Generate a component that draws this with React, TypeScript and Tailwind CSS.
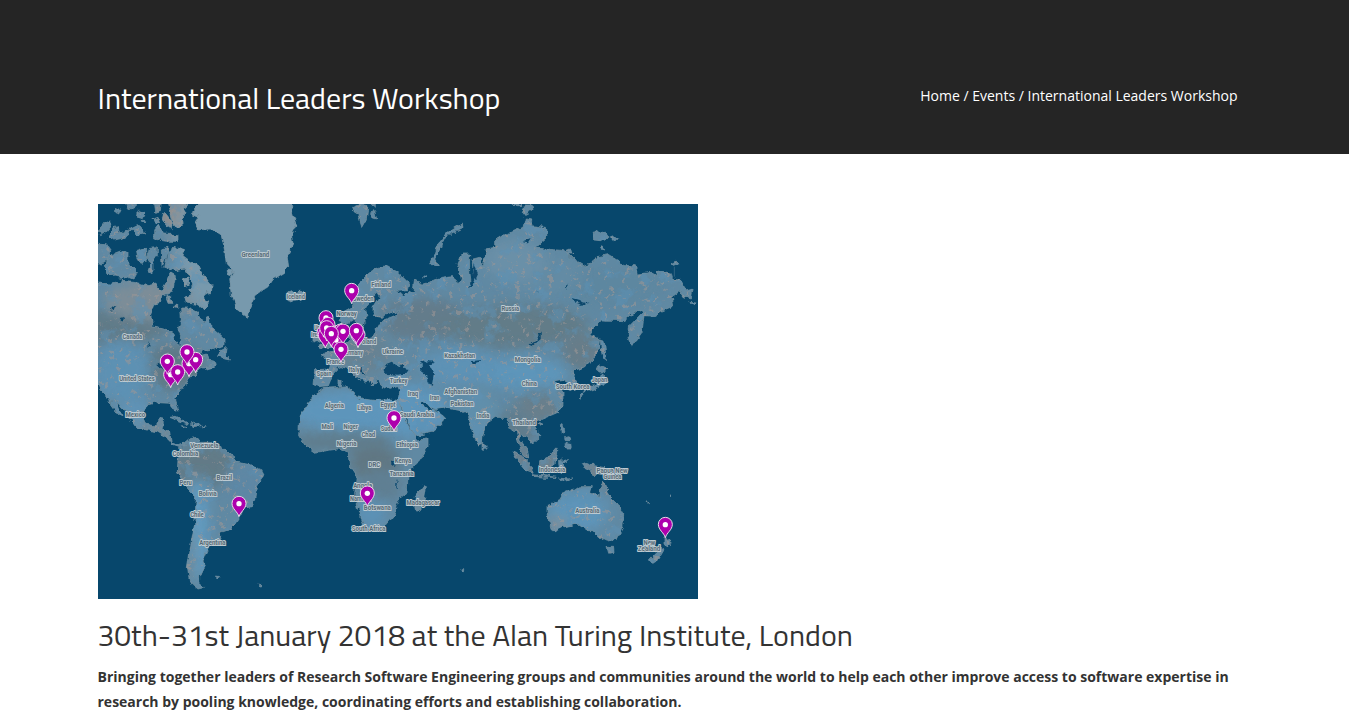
const EURASIA =
  "M720 350L738 322L760 310L775 285L778 262L788 232L815 205L840 190L865 185L900 205L935 240L930 260L900 262L885 256L915 275L945 262L950 230L975 240L1010 230L1030 220L1065 215L1080 240L1090 225L1080 180L1092 150L1115 150L1115 200L1120 240L1130 225L1125 165L1145 160L1155 190L1160 160L1165 135L1190 130L1190 108L1200 100L1240 85L1275 70L1282 42L1305 45L1300 65L1345 70L1350 100L1312 132L1345 135L1400 140L1430 170L1455 185L1490 175L1500 158L1530 152L1560 170L1575 185L1612 185L1618 210L1660 205L1680 215L1680 202L1715 210L1745 232L1762 258L1785 252L1780 285L1755 278L1745 262L1720 280L1725 308L1690 322L1665 337L1638 335L1632 385L1600 430L1590 400L1595 365L1637 322L1615 320L1580 350L1510 348L1475 390L1505 405L1500 440L1475 480L1430 500L1425 520L1440 545L1428 560L1412 555L1405 525L1372 530L1395 565L1395 600L1380 625L1345 640L1320 650L1300 650L1300 668L1322 685L1322 705L1305 722L1295 708L1270 690L1265 705L1290 740L1292 765L1275 755L1262 720L1255 680L1240 678L1225 640L1192 640L1165 660L1155 690L1153 722L1143 726L1128 700L1115 655L1112 635L1090 620L1040 612L1010 617L995 612L978 592L968 590L985 618L1015 620L1040 640L1030 660L1000 685L950 698L925 645L900 592L905 560L900 548L870 553L850 545L838 520L835 540L825 545L810 520L790 490L770 478L775 495L815 520L815 528L800 535L790 528L770 512L750 492L725 485L715 505L698 525L690 545L665 548L645 542L650 497L695 495L700 470L672 455L690 445L715 440L730 425L755 415L755 385L770 382L772 408L800 408L825 400L840 372L852 350L890 335L905 320L880 325L850 340L825 335L825 312L845 280L835 268L810 300L800 315L805 345L790 375L775 360L770 345L745 358Z";
const N_AMERICA =
  "M-30 235L40 240L75 232L120 236L150 245L170 240L190 262L205 235L215 205L232 215L225 255L215 270L195 275L190 295L170 300L158 335L165 365L200 372L225 390L232 415L245 425L248 395L240 375L250 350L248 312L275 312L300 325L315 355L328 340L345 375L378 405L378 425L340 435L310 440L305 455L325 450L330 470L350 475L345 490L320 490L300 500L290 515L270 520L262 540L245 565L228 582L240 620L232 622L215 598L180 596L145 603L135 630L145 660L170 665L182 645L198 648L192 675L215 683L220 715L240 725L258 718L262 726L245 732L225 725L205 700L175 682L145 678L105 662L90 630L65 600L55 590L72 635L60 630L38 600L35 588L10 565L0 540L-30 530Z";
const S_AMERICA =
  "M255 722L275 705L290 700L310 712L340 712L385 738L410 755L412 775L450 780L490 795L498 810L490 830L475 850L470 890L460 908L435 912L425 935L400 975L370 985L372 1005L335 1020L325 1040L315 1065L322 1080L305 1115L305 1135L322 1150L300 1155L275 1135L268 1090L282 1000L290 960L295 880L265 850L238 805L240 765L252 745Z";
const AFRICA =
  "M645 575L680 550L755 545L765 575L800 585L835 590L870 587L900 592L910 620L925 655L945 690L955 708L990 705L990 730L960 775L930 805L928 865L900 888L888 935L860 970L800 975L785 925L770 870L775 815L755 785L750 745L720 735L650 745L622 725L602 695L605 640L630 600Z";
const AUSTRALIA =
  "M1350 905L1385 890L1400 865L1430 855L1445 845L1480 845L1475 865L1505 880L1510 840L1518 835L1530 870L1560 900L1577 930L1575 965L1555 1005L1525 1012L1500 1000L1485 980L1470 980L1440 960L1400 968L1365 985L1358 970L1350 925Z";
const GREENLAND =
  "M305 -30L305 0L280 28L300 35L290 60L300 78L340 75L370 95L380 140L385 180L405 200L395 225L400 275L415 315L448 340L455 310L470 275L510 245L520 230L560 205L575 190L570 150L585 120L580 90L595 60L585 30L580 0L580 -30Z";
const ARCTIC_ISLANDS =
  "M165 -20L195 -20L190 20L170 25ZM205 -20L272 -20L255 30L258 55L240 75L220 45ZM80 -10L112 -5L112 8L90 20ZM50 15L72 15L65 30L50 25ZM0 80L20 55L35 45L38 65L22 85L5 95ZM30 100L50 70L60 68L65 90L95 75L85 100L50 108ZM95 72L115 62L135 75L140 90L120 95ZM120 20L140 28L132 45L118 40ZM130 48L140 50L138 56L130 55ZM170 75L180 62L195 90L240 92L240 112L200 112L170 105ZM165 45L180 40L185 55L170 58ZM200 25L212 40L225 60L222 75L205 62L195 45ZM-20 120L25 122L38 140L35 165L10 180L-20 170ZM22 180L30 155L70 140L90 148L90 180L115 205L105 225L85 218L70 228L55 210L30 212ZM115 140L145 130L148 160L132 182L120 165ZM155 130L178 128L178 155L165 175L165 205L150 200L158 180L148 165ZM190 135L210 130L205 155L192 190ZM210 145L230 130L260 140L255 155L275 170L300 185L310 205L342 245L340 270L325 265L315 275L328 300L320 315L295 300L265 298L260 280L280 270L275 255L285 240L260 195L235 200L200 190ZM255 225L270 222L275 240L258 245ZM205 275L218 280L225 298L210 298ZM232 300L240 302L238 310L230 308ZM365 440L385 430L382 450L395 465L362 458ZM320 490L350 478L352 488L325 495ZM385 195L405 198L405 215L385 208Z";
const OTHER_ISLANDS =
  "M565 265L580 260L590 268L610 258L622 275L612 290L585 292L565 285ZM762 12L790 0L810 5L805 45L792 68L780 30L765 20ZM818 25L830 20L836 45L820 40ZM820 0L832 0L832 10L820 8ZM995 180L1010 150L1020 120L1050 85L1090 60L1092 72L1060 88L1032 115L1025 140L1010 165L1025 190L1005 188ZM1240 0L1268 0L1270 8L1245 8ZM1270 25L1285 0L1298 0L1302 18L1285 28ZM1485 85L1495 78L1508 90L1520 85L1530 100L1510 110L1490 108ZM1537 98L1550 95L1560 108L1545 110ZM1505 130L1512 125L1520 138L1508 140ZM1405 138L1418 135L1422 150L1408 150ZM975 212L985 214L982 220L974 218ZM1720 180L1735 172L1745 182L1725 187ZM1775 295L1792 297L1788 302ZM1507 405L1518 408L1522 440L1525 470L1515 465L1510 440ZM1505 482L1530 492L1518 502L1505 508L1498 498ZM1510 510L1520 518L1528 535L1505 550L1475 560L1455 565L1462 550L1490 545L1505 530ZM1447 568L1455 570L1448 585ZM670 360L700 352L710 390L725 415L705 430L685 432L660 425L695 405L680 390ZM645 390L665 385L668 410L645 418ZM215 640L235 637L268 655L270 660L240 650ZM278 660L295 655L310 665L282 668ZM250 665L262 667L255 670ZM313 664L322 666L315 669ZM1155 720L1168 728L1162 736L1155 735ZM975 845L985 850L980 880L965 922L952 920L950 900L952 875ZM1245 742L1265 750L1305 790L1305 805L1285 800L1260 770ZM1325 770L1345 765L1370 735L1380 740L1370 785L1345 790L1325 785ZM1382 775L1395 765L1410 768L1390 775L1400 790L1392 810L1384 795ZM1305 812L1340 815L1375 820L1340 820L1308 817ZM1385 595L1395 600L1390 612L1385 608ZM1387 665L1395 662L1400 680L1390 690ZM1400 715L1418 718L1420 732L1408 732ZM1400 700L1415 695L1418 710L1402 710ZM1320 658L1332 660L1325 667ZM1452 780L1465 775L1490 785L1525 792L1560 830L1545 828L1510 815L1485 810L1480 800L1460 790ZM1380 822L1410 825L1425 822L1390 830ZM1530 1030L1547 1030L1548 1045L1535 1048ZM1698 1000L1705 1012L1720 1008L1718 1020L1708 1032L1698 1020ZM1690 1030L1698 1035L1680 1065L1665 1075L1652 1070L1670 1050ZM1640 890L1655 902L1648 900ZM1715 872L1721 875L1717 878ZM352 1116L365 1118L358 1122ZM481 1140L492 1145L486 1146ZM1092 1094L1097 1094L1097 1100L1092 1100ZM720 528L730 530L728 545L720 542Z";
const INLAND_WATER =
  "M865 480L885 472L895 490L915 480L935 505L900 512L865 510L857 500ZM970 475L1000 468L1005 480L995 485L1010 510L1005 542L985 538L985 515L972 495ZM1120 472L1150 468L1145 474L1125 478ZM1295 422L1320 400L1328 385L1328 402L1310 418L1300 426ZM1275 115L1298 105L1290 118ZM1130 180L1140 210L1122 250L1110 255L1125 225ZM1405 235L1408 255L1404 250ZM1420 285L1440 290L1475 300L1450 302L1430 295ZM880 772L892 775L888 788L880 785ZM895 830L900 852L895 850ZM1375 175L1378 190ZM175 480L205 475L215 490L195 498ZM205 498L215 510L205 525ZM150 408L158 430L152 432ZM35 320L55 305L50 318ZM65 345L85 340L70 352ZM1310 260L1330 265L1320 262Z";
const LAND = [N_AMERICA, S_AMERICA, AFRICA, AUSTRALIA, GREENLAND, ARCTIC_ISLANDS, OTHER_ISLANDS, EURASIA].join("");

type Patch = [cx: number, cy: number, rx: number, ry: number, color: string];
const PATCHES: Patch[] = [
  [60, 370, 150, 50, "#607a88"],
  [230, 490, 90, 70, "#5f7987"],
  [150, 290, 130, 60, "#7b8d98"],
  [240, 30, 60, 60, "#93908f"],
  [290, 240, 70, 70, "#7f8e98"],
  [70, 500, 85, 90, "#5d91b3"],
  [110, 620, 50, 45, "#6093b5"],
  [170, 690, 50, 30, "#768a95"],
  [450, 120, 220, 260, "#7799ad"],
  [320, 785, 95, 70, "#627a87"],
  [440, 840, 60, 60, "#5d87a4"],
  [300, 970, 30, 160, "#629bc1"],
  [275, 1050, 12, 90, "#708896"],
  [760, 620, 190, 60, "#5d95bb"],
  [930, 620, 120, 80, "#5d95bb"],
  [720, 715, 160, 25, "#5f7c8b"],
  [830, 775, 75, 55, "#617783"],
  [850, 845, 60, 50, "#5e7f93"],
  [820, 930, 45, 45, "#5c91b5"],
  [965, 890, 25, 50, "#6d8a9b"],
  [970, 345, 130, 65, "#637c8b"],
  [1250, 365, 220, 65, "#627b88"],
  [1450, 440, 60, 60, "#667d89"],
  [1540, 250, 170, 70, "#5d87a0"],
  [1330, 215, 120, 60, "#648ba4"],
  [1250, 170, 90, 60, "#6b90a8"],
  [1090, 490, 120, 55, "#5d92b5"],
  [1280, 510, 130, 50, "#5d95ba"],
  [1330, 610, 80, 50, "#687f8c"],
  [1240, 680, 70, 60, "#617c8c"],
  [1270, 790, 60, 60, "#697f8d"],
  [1140, 640, 60, 90, "#618fab"],
  [1440, 925, 90, 60, "#5d94b9"],
  [1380, 960, 25, 20, "#858f95"],
  [1350, 775, 40, 35, "#6c7f8a"],
  [1510, 810, 60, 40, "#71828d"],
  [800, 450, 80, 60, "#668293"],
  [685, 400, 40, 50, "#728c9c"],
];

type Label = [text: string, x: number, y: number, width: number];
const LABELS: Label[] = [
  ["Greenland", 472, 153, 86], ["Iceland", 593, 277, 58], ["Canada", 103, 397, 62], ["United States", 117, 524, 110],
  ["Finland", 849, 241, 62], ["Sweden", 795, 284, 66], ["Norway", 746, 328, 64], ["United Kingdom", 700, 370, 106], ["Ireland", 665, 391, 55],
  ["Poland", 808, 413, 56], ["Germany", 763, 445, 66], ["France", 712, 473, 56], ["Ukraine", 884, 443, 66], ["Spain", 678, 508, 48],
  ["Italy", 768, 496, 36], ["Turkey", 902, 530, 56], ["Kazakhstan", 1085, 455, 96], ["Iraq", 945, 570, 34], ["Iran", 1010, 580, 32],
  ["Afghanistan", 1088, 563, 102], ["Pakistan", 1092, 599, 72], ["Russia", 1237, 314, 56], ["Mongolia", 1289, 467, 80], ["China", 1294, 540, 48],
  ["South Korea", 1424, 548, 104], ["Japan", 1504, 528, 50], ["Mexico", 112, 631, 62], ["Venezuela", 319, 725, 88], ["Colombia", 262, 750, 80],
  ["Peru", 263, 837, 40], ["Brazil", 379, 821, 50], ["Bolivia", 329, 869, 57], ["Chile", 297, 932, 44], ["Argentina", 343, 1017, 82],
  ["Algeria", 709, 605, 60], ["Libya", 799, 611, 46], ["Egypt", 870, 603, 48], ["Saudi Arabia", 957, 633, 106], ["Mali", 688, 669, 38],
  ["Niger", 758, 669, 46], ["Chad", 811, 691, 44], ["Sudan", 872, 674, 50], ["Nigeria", 746, 718, 62], ["Ethiopia", 927, 722, 68],
  ["Kenya", 915, 771, 52], ["DRC", 829, 782, 38], ["Tanzania", 911, 809, 76], ["Angola", 794, 845, 60], ["Namibia", 787, 885, 65],
  ["Botswana", 838, 910, 84], ["South Africa", 812, 975, 104], ["Madagascar", 975, 897, 102], ["India", 1155, 636, 42], ["Thailand", 1278, 655, 74],
  ["Indonesia", 1362, 796, 82], ["Papua New", 1542, 800, 96], ["Guinea", 1543, 817, 58], ["Australia", 1468, 920, 76], ["New", 1654, 1015, 38], ["Zealand", 1653, 1034, 70],
];

const PINS: [number, number][] = [
  [273, 517], [293, 505], [218, 550], [208, 510], [239, 542], [267, 482],
  [761, 298], [684, 380], [678, 424], [682, 431], [690, 400], [728, 420], [714, 446], [686, 410], [735, 420], [780, 430], [775, 418], [700, 427], [729, 474],
  [423, 937], [888, 680], [808, 906], [1702, 1000],
];

function Pin({ x, y }: { x: number; y: number }) {
  return (
    <g transform={`translate(${x} ${y + 1})`}>
      <path d="M0 0C-4-15-21-23-21-40A21 21 0 0 1 21-40C21-23 4-15 0 0Z" fill="#ad00ad" stroke="#e7dbe9" strokeWidth="3" />
      <circle cy="-39" r="8" fill="#fff" />
    </g>
  );
}

function WorldMap() {
  return (
    <svg className="block h-[395px] w-[600px]" viewBox="0 0 1800 1185" role="img" aria-label="World map">
      <defs>
        <filter id="coast" x="-30" y="-30" width="1860" height="1245" filterUnits="userSpaceOnUse">
          <feTurbulence type="fractalNoise" baseFrequency="0.05" numOctaves="3" seed="4" result="n" />
          <feDisplacementMap in="SourceGraphic" in2="n" scale="18" xChannelSelector="R" yChannelSelector="G" />
          <feGaussianBlur stdDeviation="0.8" />
        </filter>
        <filter id="soft" x="-80%" y="-80%" width="260%" height="260%">
          <feGaussianBlur stdDeviation="18" />
        </filter>
        <filter id="warm" x="0" y="0" width="1800" height="1185" filterUnits="userSpaceOnUse" colorInterpolationFilters="sRGB">
          <feTurbulence type="fractalNoise" baseFrequency="0.06" numOctaves="4" seed="9" />
          <feColorMatrix values="0 0 0 0 .61  0 0 0 0 .59  0 0 0 0 .59  10 0 0 0 -6.3" />
        </filter>
        <filter id="cool" x="0" y="0" width="1800" height="1185" filterUnits="userSpaceOnUse" colorInterpolationFilters="sRGB">
          <feTurbulence type="fractalNoise" baseFrequency="0.02" numOctaves="4" seed="21" />
          <feColorMatrix values="0 0 0 0 .36  0 0 0 0 .57  0 0 0 0 .71  7 0 0 0 -3.8" />
        </filter>
        <clipPath id="land"><path d={LAND} /></clipPath>
        <clipPath id="textured"><path d={[N_AMERICA, ARCTIC_ISLANDS, EURASIA, S_AMERICA, AUSTRALIA, OTHER_ISLANDS].join("")} /></clipPath>
      </defs>
      <rect width="1800" height="1185" fill="#07476c" />
      <g filter="url(#coast)">
        <g clipPath="url(#land)">
          <rect x="-30" y="-30" width="1860" height="1245" fill="#6089a3" />
          {PATCHES.map(([cx, cy, rx, ry, color], i) => (
            <ellipse key={i} cx={cx} cy={cy} rx={rx} ry={ry} fill={color} filter="url(#soft)" />
          ))}
        </g>
        <g clipPath="url(#textured)">
          <rect width="1800" height="1185" filter="url(#cool)" opacity=".5" />
          <rect width="1800" height="1185" filter="url(#warm)" opacity=".6" />
        </g>
        <path d={LAND} fill="none" stroke="#74909f" strokeWidth="3" opacity=".7" />
        <path d={INLAND_WATER} fill="#07476c" />
      </g>
      <path d="M1729 188V218" stroke="#45728f" strokeWidth="2" />
      <g className="font-['Roboto',sans-serif] font-bold" fontSize="19.5" textAnchor="middle" fill="#566a77" stroke="#bdcad1" strokeWidth="6" strokeLinejoin="round" paintOrder="stroke">
        {LABELS.map(([text, x, y, width]) => (
          <text key={text} x={x} y={y + 7} textLength={width - 3} lengthAdjust="spacingAndGlyphs">{text}</text>
        ))}
      </g>
      {PINS.map(([x, y], i) => <Pin key={i} x={x} y={y} />)}
    </svg>
  );
}

export default function App() {
  return (
    <div className="h-[723px] overflow-hidden bg-white font-['Open_Sans',sans-serif] text-[14px] text-[#333]">
      <header className="h-[154px] bg-[#252525] pt-[79px] text-white">
        <div className="mx-auto flex w-[1154px] items-start justify-between pr-[14px]">
          <h1 className="whitespace-nowrap font-['Titillium_Web','Open_Sans',sans-serif] text-[30px] leading-[39px] font-normal">International Leaders Workshop</h1>
          <nav className="pt-[4px] leading-[25px]">
            <a>Home</a> / <a>Events</a> / <span>International Leaders Workshop</span>
          </nav>
        </div>
      </header>
      <main className="mx-auto w-[1154px] pt-[50px]">
        <WorldMap />
        <h2 className="mt-[17px] w-max font-['Titillium_Web','Open_Sans',sans-serif] text-[30px] leading-[39px] font-normal">30th-31st January 2018 at the Alan Turing Institute, London</h2>
        <p className="mt-[9px] w-[1140px] leading-[25px] font-bold">
          Bringing together leaders of Research Software Engineering groups and communities around the world to help each other improve access to software expertise in research by pooling knowledge, coordinating efforts and establishing collaboration.
        </p>
      </main>
    </div>
  );
}
